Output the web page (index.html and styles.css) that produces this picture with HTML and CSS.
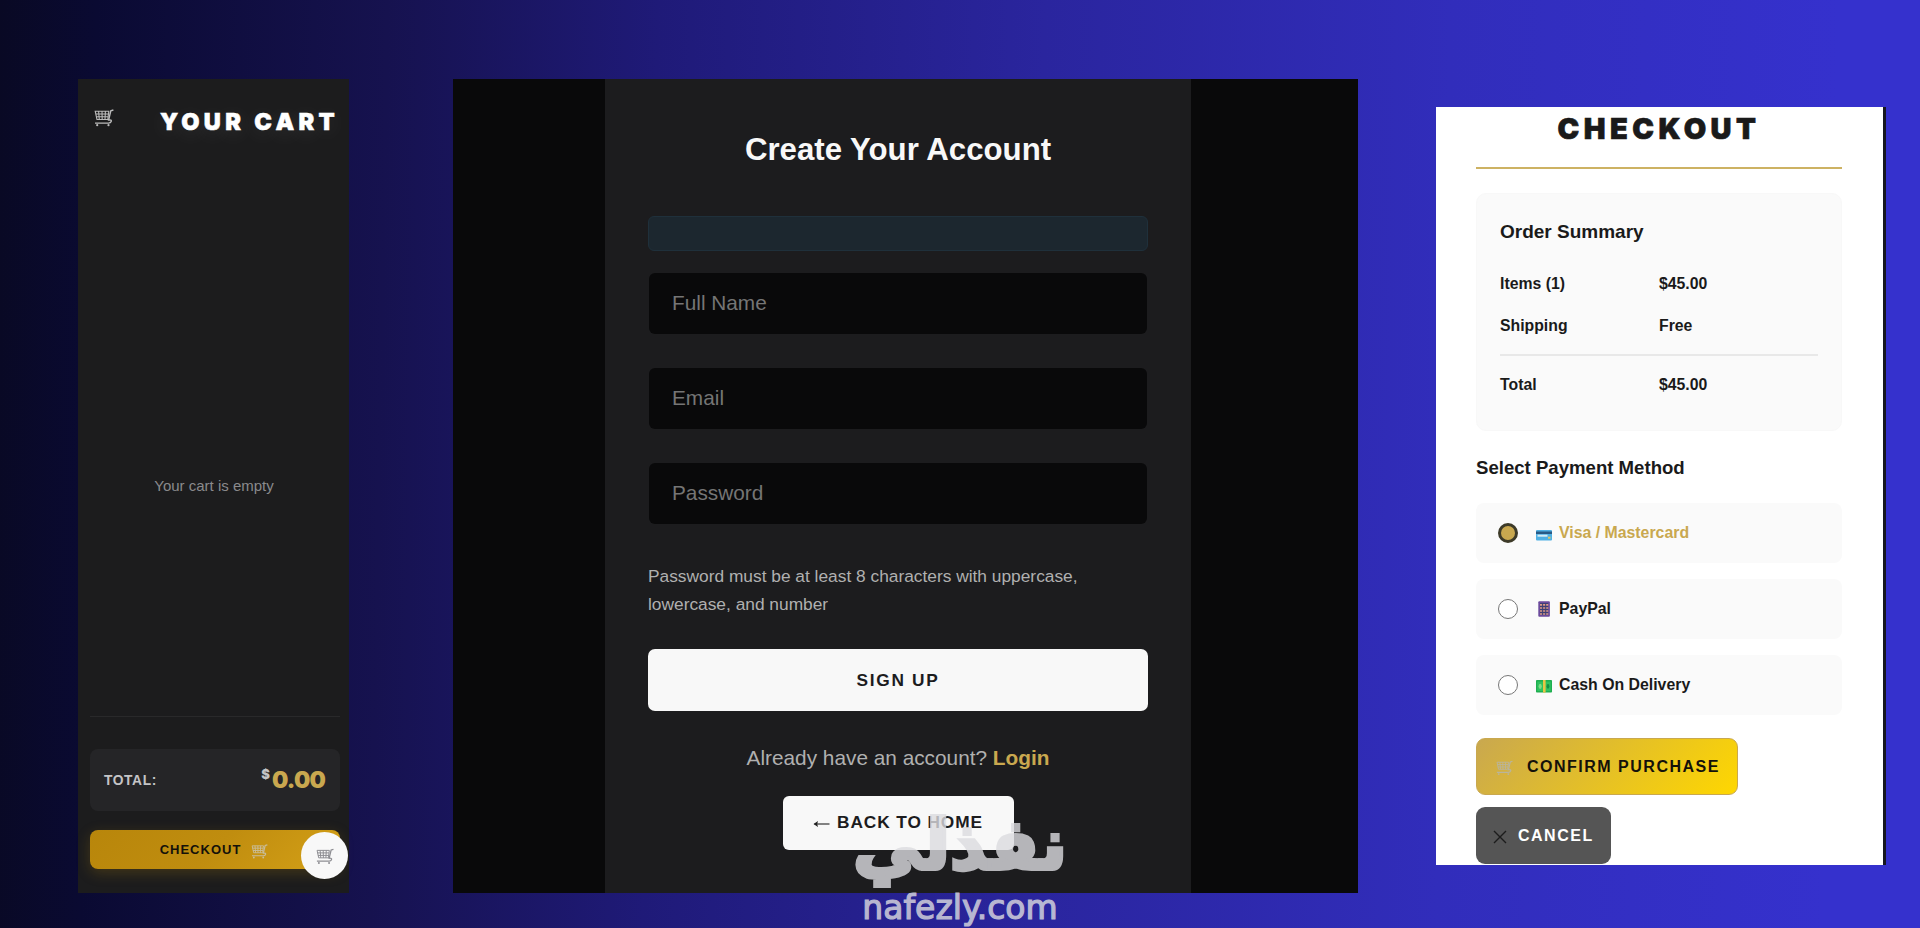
FILE: index.html
```html
<!DOCTYPE html>
<html lang="en">
<head>
  <meta charset="UTF-8">
  <title>Store</title>
  <meta name="viewport" content="width=device-width, initial-scale=1.0">
  <link rel="stylesheet" href="styles.css">
</head>
<body>

  <!-- cart icon, reused by every button -->
  <svg width="0" height="0" class="sprite">
    <symbol id="cart" viewBox="0 0 20 18">
      <path d="M1.2 2.2h13.6l-1 8.3H3z M4.6 2.2l.7 8.3 M8 2.2l.2 8.3 M11.4 2.2l-.4 8.3 M1.6 5h12.8 M2.2 7.8h12" fill="none" stroke="currentColor" stroke-width="1.1"/>
      <path d="M19.4 1l-2.6.8-2.2 9.2q3.4-.4 2.6 1.6-.6 1.6-3 1.5H1" fill="none" stroke="currentColor" stroke-width="1.4"/>
      <circle cx="3.2" cy="16.2" r="1.1" fill="currentColor"/>
      <circle cx="14.5" cy="16.2" r="1.1" fill="currentColor"/>
    </symbol>
  </svg>

  <div class="showcase">
    <aside class="cart-panel">
      <div class="cart-header">
        <svg class="cart-icon"><use href="#cart"/></svg>
        <h2>YOUR CART</h2>
      </div>
      <div class="cart-items">Your cart is empty</div>
      <div class="cart-footer">
        <div class="cart-total">
          <span class="total-label">TOTAL:</span>
          <span class="total-price"><sup>$</sup>0.00</span>
        </div>
        <button class="checkout-btn">CHECKOUT <svg><use href="#cart"/></svg></button>
      </div>
      <button class="cart-toggle"><svg><use href="#cart"/></svg></button>
    </aside>

    <section class="signup-page">
      <form class="auth-box">
        <h2>Create Your Account</h2>
        <div class="message"></div>
        <input type="text" placeholder="Full Name">
        <input type="email" placeholder="Email">
        <input type="password" placeholder="Password">
        <p class="hint">Password must be at least 8 characters with uppercase, lowercase, and number</p>
        <button type="button" class="signup-btn">SIGN UP</button>
        <p class="switch">Already have an account? <a href="#">Login</a></p>
        <a href="#" class="back-btn">
          <svg viewBox="0 0 17 10"><path d="M1.5 5H16.5" stroke="#222" stroke-width="1.1"/><path d="M.5 5l4.5-3q-1.6 3 0 6z" fill="#222"/></svg>
          BACK TO HOME
        </a>
      </form>
    </section>

    <section class="checkout-page">
      <h1>CHECKOUT</h1>
      <div class="summary">
        <h3>Order Summary</h3>
        <div class="row"><span>Items (1)</span><span>$45.00</span></div>
        <div class="row"><span>Shipping</span><span>Free</span></div>
        <div class="row total"><span>Total</span><span>$45.00</span></div>
      </div>
      <h3 class="pay-title">Select Payment Method</h3>
      <label class="pay-option selected">
        <span class="radio"></span>
        <svg viewBox="0 0 16 16"><rect y="5" width="16" height="10.5" rx="1" fill="#4fb0e4"/><rect y="6.5" width="16" height="2.5" fill="#285a86"/><rect x="1.5" y="9.7" width="10" height="2" fill="#d5ecf5"/><rect x="12" y="11.7" width="2.5" height="2" fill="#d8c66a"/></svg>
        <span>Visa / Mastercard</span>
      </label>
      <label class="pay-option">
        <span class="radio"></span>
        <svg viewBox="0 0 16 16"><rect x="2.3" y=".3" width="11.6" height="15.4" rx="1" fill="#6b4a9c"/><rect x="4" y="2" width="8.2" height="12" fill="#3d3f74"/><path d="M4 3.8h8.4M4 7h8.4M4 10h8.4M4 13h8.4" stroke="#dd9a86" stroke-width="1.7" stroke-dasharray="2.1 1"/></svg>
        <span>PayPal</span>
      </label>
      <label class="pay-option">
        <span class="radio"></span>
        <svg viewBox="0 0 16 16"><rect y="3" width="16" height="12.6" rx=".8" fill="#1fae50"/><rect x="1.3" y="4.6" width="13.4" height="9.4" fill="#2fc25f"/><ellipse cx="4.2" cy="9.3" rx="1.6" ry="2.6" fill="#7ddc86"/><ellipse cx="12" cy="9.3" rx="1.4" ry="2.4" fill="#149043"/><rect x="7" y="3" width="2.6" height="12.6" fill="#e6c545"/></svg>
        <span>Cash On Delivery</span>
      </label>
      <button class="confirm-btn"><svg><use href="#cart"/></svg>CONFIRM PURCHASE</button>
      <button class="cancel-btn"><svg viewBox="0 0 14 14"><path d="M1 1l12 12M13 1L1 13" stroke="#1c1c1c" stroke-width="1.4"/></svg>CANCEL</button>
    </section>
  </div>

  <div class="watermark">
    <div class="wm-ar" lang="ar" dir="rtl">نفذلي</div>
    <div class="wm-en">nafezly.com</div>
  </div>

</body>
</html>
```

FILE: styles.css
```css
* {
  box-sizing: border-box;
  margin: 0;
  padding: 0;
}

body {
  font-family: "Liberation Sans", Arial, sans-serif;
  background: linear-gradient(91deg, #090924 0%, #0a0a32 5%, #16124f 20%, #1f1a78 34%, #2a259e 54%, #312dbb 75%, #3531cd 95%);
  width: 1920px;
  height: 928px;
  overflow: hidden;
  position: relative;
}

.sprite {
  display: block;
}

button {
  border: none;
  font-family: inherit;
  font-weight: bold;
  cursor: pointer;
}

.showcase {
  display: flex;
  align-items: flex-start;
  padding: 79px 0 0 78px;
}

/* cart */
.cart-panel {
  width: 271px;
  height: 814px;
  background: #1c1c1d;
  position: relative;
  display: flex;
  flex-direction: column;
}

.cart-header {
  display: flex;
  justify-content: space-between;
  align-items: center;
  height: 84px;
  padding: 0 14px 0 16px;
  color: #fff;
}

.cart-icon {
  width: 20px;
  height: 18px;
  color: #bbb;
  margin-bottom: 6px;
}

.cart-header h2 {
  font-family: Inter, sans-serif;
  font-weight: 900;
  font-size: 23.6px;
  letter-spacing: 4.3px;
  margin-right: -4px;
  -webkit-text-stroke: 0.5px #fff;
  text-shadow: 0 4px 20px rgba(255, 255, 255, 0.12);
}

.cart-items {
  flex: 1;
  display: flex;
  align-items: center;
  justify-content: center;
  font-size: 15px;
  color: #8a8a8c;
  padding-top: 91px;
  padding-left: 1px;
}

.cart-footer {
  margin: 0 9px 0 12px;
  height: 177px;
  border-top: 1px solid #29292a;
  padding-top: 32px;
}

.cart-total {
  height: 62px;
  background: #252527;
  border-radius: 8px;
  display: flex;
  align-items: center;
  justify-content: space-between;
  padding: 0 15px 0 14px;
}

.total-label {
  font-size: 13.8px;
  font-weight: bold;
  letter-spacing: 0.6px;
  color: #c4c4c6;
}

.total-price {
  font-family: Inter, sans-serif;
  font-weight: 900;
  font-size: 23px;
  letter-spacing: -0.8px;
  color: #c9a84f;
}

.total-price sup {
  font-size: 13px;
  color: #c4c4c6;
  margin-right: 3px;
}

.checkout-btn {
  width: 100%;
  height: 39px;
  margin-top: 19px;
  border-radius: 8px;
  background: linear-gradient(135deg, #b8860b, #c08d0f 50%, #d4a017);
  box-shadow: 0 4px 14px rgba(184, 134, 11, 0.25);
  font-size: 13px;
  letter-spacing: 1px;
  color: #14110a;
  display: flex;
  align-items: center;
  justify-content: center;
  gap: 10px;
  padding-right: 2px;
}

.checkout-btn svg {
  width: 17px;
  height: 15px;
  color: #c9bd9a;
  margin-top: 3px;
}

.cart-toggle {
  position: absolute;
  right: 1px;
  bottom: 14px;
  width: 47px;
  height: 47px;
  border-radius: 50%;
  background: #f8f8f8;
  display: flex;
  align-items: center;
  justify-content: center;
}

.cart-toggle svg {
  width: 18px;
  height: 17px;
  color: #8d8d92;
  margin-top: 2px;
}

/* sign up */
.signup-page {
  width: 905px;
  height: 814px;
  margin-left: 104px;
  padding-left: 152px;
  background: #09090a;
}

.auth-box {
  width: 586px;
  height: 814px;
  background: #1c1c1e;
  padding: 52px 43px 0 43px;
  display: flex;
  flex-direction: column;
}

.auth-box h2 {
  font-size: 31.2px;
  line-height: 38px;
  color: #f8f8f8;
  text-align: center;
  margin-bottom: 47px;
}

.message {
  height: 35px;
  background: #1c272f;
  border: 1px solid #1f303b;
  border-radius: 6px;
  margin-bottom: 22px;
}

.auth-box input {
  height: 61px;
  margin: 0 1px 34px;
  padding: 0 23px 1px;
  border: none;
  border-radius: 6px;
  background: #09090a;
  font-family: inherit;
  font-size: 20.8px;
  color: #fff;
}

.auth-box input::placeholder {
  color: #757575;
}

.hint {
  font-size: 17.33px;
  line-height: 28px;
  color: #b0b0b0;
  margin-top: 4px;
  margin-bottom: 31px;
}

.signup-btn {
  height: 62px;
  background: #f8f8f8;
  border-radius: 7px;
  font-size: 17.3px;
  letter-spacing: 1.7px;
  color: #1c1c1e;
}

.switch {
  font-size: 20.8px;
  line-height: 28px;
  color: #b0b0b0;
  text-align: center;
  margin: 33px 0 24px;
}

.switch a {
  color: #c9a84f;
  font-weight: bold;
  text-decoration: none;
}

.back-btn {
  align-self: center;
  width: 231px;
  height: 54px;
  background: #f8f8f8;
  border-radius: 6px;
  color: #1c1c1e;
  font-size: 17.3px;
  font-weight: bold;
  letter-spacing: 0.9px;
  text-decoration: none;
  display: flex;
  align-items: center;
  justify-content: center;
  gap: 7px;
  padding-bottom: 1px;
}

.back-btn svg {
  width: 17px;
  height: 10px;
  margin-top: 3px;
}

/* checkout */
.checkout-page {
  width: 450px;
  height: 758px;
  margin: 28px 0 0 78px;
  padding: 0 41px 0 40px;
  background: #fff;
  border-right: 3px solid #17171f;
  color: #1a1a1a;
  overflow: hidden;
}

.checkout-page h1 {
  font-family: Inter, sans-serif;
  font-weight: 900;
  font-size: 29px;
  line-height: 43px;
  letter-spacing: 4.5px;
  -webkit-text-stroke: 0.7px #1a1a1a;
  text-align: center;
  height: 62px;
  border-bottom: 2px solid #cdb263;
  margin-bottom: 24px;
}

.summary {
  height: 238px;
  background: #fafafa;
  border: 1px solid #f8f8f8;
  border-radius: 10px;
  padding: 25px 23px 0 23px;
}

.summary h3 {
  font-size: 19px;
  line-height: 26px;
  margin-bottom: 18px;
}

.row {
  display: grid;
  grid-template-columns: 159px 1fr;
  align-items: center;
  height: 42px;
  font-size: 15.8px;
  font-weight: bold;
}

.row.total {
  border-top: 2px solid #e8e8e8;
  margin-top: 7px;
  height: 59px;
}

.pay-title {
  font-size: 18.6px;
  line-height: 26px;
  margin: 24px 0 22px;
}

.pay-option {
  display: flex;
  align-items: center;
  height: 60px;
  margin-bottom: 16px;
  padding: 0 0 1px 22px;
  border-radius: 8px;
  background: #fafafa;
  font-size: 15.85px;
  font-weight: bold;
}

.pay-option svg {
  width: 16px;
  height: 16px;
  margin: 0 7px 0 18px;
}

.pay-option.selected {
  color: #c9a84f;
}

.radio {
  width: 20px;
  height: 20px;
  border: 1px solid #777;
  border-radius: 50%;
  background: #fff;
}

.selected .radio {
  background: #c9a84f;
  border: 3px solid #3d3a28;
}

.confirm-btn,
.cancel-btn {
  display: flex;
  align-items: center;
  height: 57px;
  border-radius: 9px;
  font-size: 16px;
  letter-spacing: 1.5px;
}

.confirm-btn {
  width: 262px;
  padding-left: 19px;
  gap: 14px;
  border: 1px solid #c9a84f;
  background: linear-gradient(135deg, #c9a84f, #ffd700);
  color: #14110a;
  margin: 23px 0 12px;
}

.confirm-btn svg {
  width: 17px;
  height: 16px;
  color: #b9b49c;
  margin-top: 3px;
}

.cancel-btn {
  width: 135px;
  padding-left: 17px;
  gap: 11px;
  background: #555;
  color: #fff;
}

.cancel-btn svg {
  width: 14px;
  height: 14px;
  margin-top: 3px;
}

/* watermark */
.watermark {
  position: absolute;
  left: 850px;
  top: 799px;
  width: 220px;
  text-align: center;
  color: #dcdce0;
  opacity: 0.8;
}

.wm-ar {
  font-family: "DejaVu Sans", sans-serif;
  font-weight: bold;
  font-size: 70px;
  line-height: 92px;
  -webkit-text-stroke: 4px #dcdce0;
}

.wm-en {
  font-family: "DejaVu Sans", sans-serif;
  font-size: 33px;
  line-height: 34px;
  -webkit-text-stroke: 1.2px #dcdce0;
}
```
